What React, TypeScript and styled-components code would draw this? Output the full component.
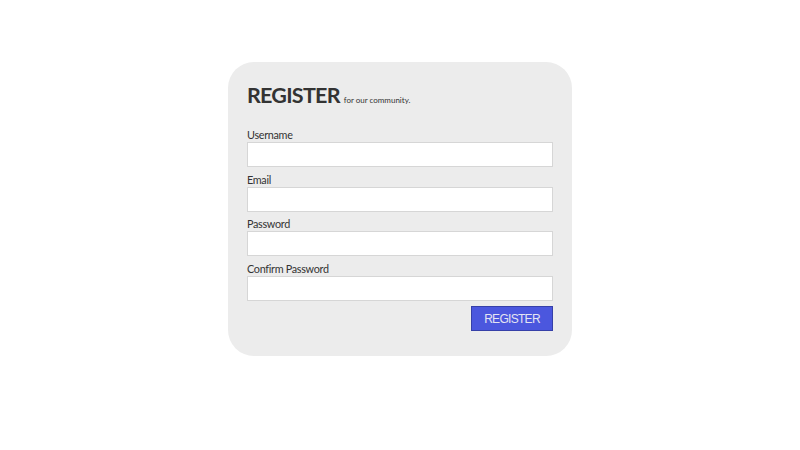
import React from "react";
import styled, { createGlobalStyle } from "styled-components";

const Global = createGlobalStyle`
  html, body { margin: 0; padding: 0; background: #ffffff; }
  body { font-family: Lato, "Open Sans", sans-serif; }
`;

const Page = styled.div`
  display: flex;
  justify-content: center;
  padding-top: 62px;
`;

const Card = styled.form`
  width: 344px;
  box-sizing: border-box;
  background: #ececec;
  border-radius: 26px;
  padding: 18px 19px 25px 19px;
  display: flex;
  flex-direction: column;
`;

const Heading = styled.div`
  display: flex;
  align-items: baseline;
  gap: 4px;
  margin-bottom: 18px;
`;

const Title = styled.h1`
  margin: 0;
  font-family: Lato, sans-serif;
  font-size: 21.5px;
  font-weight: 700;
  letter-spacing: -0.75px;
  color: #333333;
  line-height: 30px;
`;

const Sub = styled.span`
  font-family: Lato, sans-serif;
  font-size: 8px;
  color: #333333;
`;

const Field = styled.label`
  display: flex;
  flex-direction: column;
  margin-bottom: 5.5px;
`;

const LabelText = styled.span`
  font-family: Lato, sans-serif;
  font-size: 10.8px;
  letter-spacing: -0.3px;
  color: #333333;
  line-height: 14px;
  margin-bottom: 0;
`;

const Input = styled.input`
  box-sizing: border-box;
  height: 25px;
  width: 100%;
  border: 1px solid #d6d6d6;
  background: #ffffff;
  margin: 0;
  padding: 0 4px;
`;

const Actions = styled.div`
  display: flex;
  justify-content: flex-end;
`;

const Button = styled.button`
  width: 82px;
  height: 25px;
  box-sizing: border-box;
  background: #4b57de;
  border: 1px solid #3640a8;
  color: #e4e4f2;
  font-family: "Liberation Sans", Arial, sans-serif;
  font-size: 12px;
  letter-spacing: -0.7px;
  padding: 1px 0 0 0;
`;

const fields = ["Username", "Email", "Password", "Confirm Password"];

export default function App() {
  return (
    <>
      <Global />
      <Page>
        <Card onSubmit={(e) => e.preventDefault()}>
          <Heading>
            <Title>REGISTER</Title>
            <Sub>for our community.</Sub>
          </Heading>
          {fields.map((f) => (
            <Field key={f}>
              <LabelText>{f}</LabelText>
              <Input type={f.includes("Password") ? "password" : "text"} />
            </Field>
          ))}
          <Actions>
            <Button type="submit">REGISTER</Button>
          </Actions>
        </Card>
      </Page>
    </>
  );
}
